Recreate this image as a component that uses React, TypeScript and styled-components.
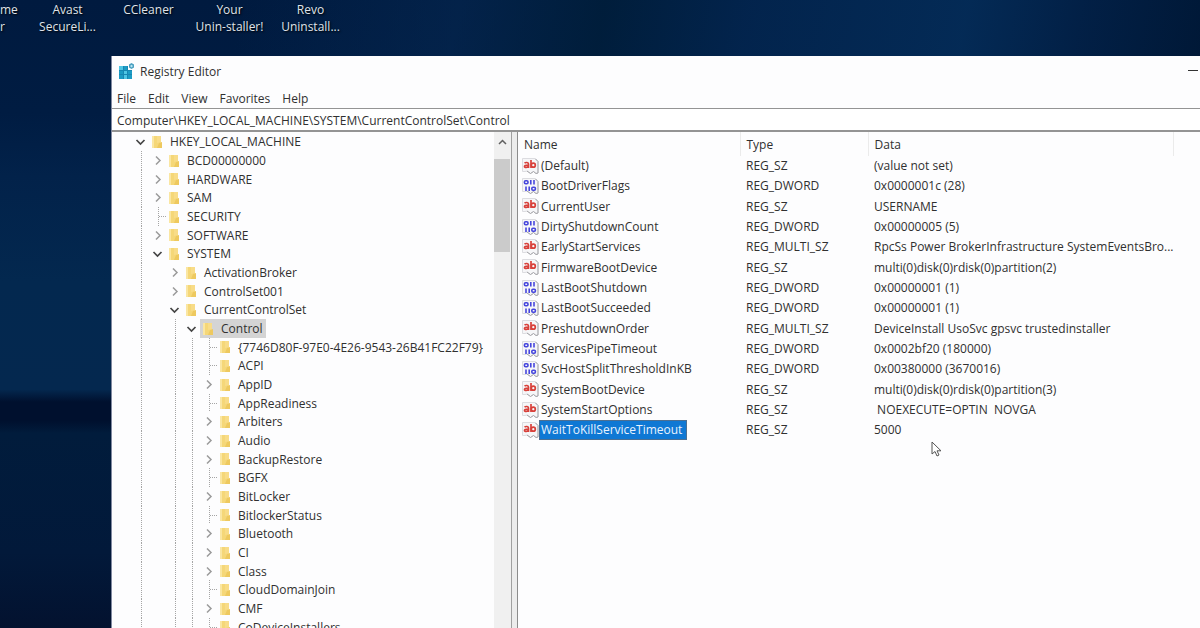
import React from 'react';
import styled, { createGlobalStyle, css } from 'styled-components';

const Global = createGlobalStyle`
  * { box-sizing: border-box; }
  body {
    margin: 0;
    overflow: hidden;
    font-family: 'Open Sans', 'Noto Sans', sans-serif;
    font-size: 12px;
    color: #303030;
  }
`;

const Desktop = styled.div`
  display: flex;
  flex-direction: column;
  height: 100vh;
  overflow: hidden;
  background:
    linear-gradient(100deg, rgba(0, 32, 70, 0) 20%, rgba(6, 42, 84, 0.5) 38%, rgba(0, 30, 58, 0.8) 50%, rgba(3, 38, 80, 0.8) 62%, rgba(4, 44, 88, 0.9) 80%, rgba(2, 32, 70, 0.9) 90%, rgba(0, 24, 54, 0.9) 100%) 0 0 / 100% 56px no-repeat,
    linear-gradient(180deg, #001a3f 0, #001c42 18%, #02224a 28%, #03284f 45%, #04284f 62%, #00102e 64%, #00102e 67%, #011c3c 69%, #02193a 88%, #03122f 100%);
`;

const Shortcuts = styled.nav`
  display: flex;
  flex: none;
  height: 56px;
  padding-top: 1px;
`;

const Shortcut = styled.a<{ $cut?: boolean }>`
  flex: none;
  width: ${(p) => (p.$cut ? 27 : 81)}px;
  color: #dfe3ea;
  font-size: 12px;
  line-height: 17px;
  text-align: ${(p) => (p.$cut ? 'left' : 'center')};
  text-decoration: none;
  text-shadow: 1px 1px 2px #000;
`;

const Line = styled.span`
  display: block;
  white-space: nowrap;
`;

const Window = styled.main`
  display: flex;
  flex: 1;
  flex-direction: column;
  min-height: 0;
  margin-left: 111px;
  border-left: 1px solid #8088a0;
  background: #fdfdfe;
`;

const TitleBar = styled.header`
  display: flex;
  flex: none;
  align-items: center;
  gap: 5px;
  height: 30px;
  padding-left: 6px;
`;

const Title = styled.h1`
  flex: 1;
  margin: 0;
  font-size: 12px;
  font-weight: 400;
`;

const Minimize = styled.button`
  display: flex;
  align-items: center;
  justify-content: flex-end;
  width: 46px;
  height: 30px;
  padding: 0 2px 0 0;
  border: 0;
  background: none;
`;

const MenuBar = styled.nav`
  display: flex;
  flex: none;
  gap: 12px;
  height: 22px;
  padding: 4px 0 0 5px;
`;

const MenuButton = styled.button`
  padding: 0;
  border: 0;
  background: none;
  color: inherit;
  font: inherit;
  line-height: 18px;
`;

const Address = styled.input`
  flex: none;
  width: 100%;
  height: 24px;
  padding: 1px 5px 0;
  border: solid #949494;
  border-width: 1px 0 2px;
  outline: 0;
  background: #fff;
  color: inherit;
  font: inherit;
`;

const Panes = styled.div`
  display: flex;
  flex: 1;
  min-height: 0;
`;

const TreePane = styled.section`
  display: flex;
  flex: none;
  width: 400px;
  border-right: 1px solid #a0a0a0;
`;

const Tree = styled.ul`
  flex: 1;
  margin: 0;
  padding: 0 0 0 20px;
  overflow: hidden;
  list-style: none;
`;

const TreeRow = styled.li`
  display: flex;
  height: 19px;
  &:nth-child(3n) { height: 18px; }
`;

const dotted = css`
  background-image: repeating-linear-gradient(180deg, #a5a5a5 0 1px, transparent 1px 2px);
  background-position: 9px 0;
  background-size: 1px 100%;
  background-repeat: no-repeat;
`;

const Guide = styled.span<{ $line: boolean }>`
  flex: none;
  width: 17px;
  ${(p) => p.$line && dotted}
`;

const LeafGuide = styled(Guide)`
  display: flex;
  align-items: center;
  justify-content: flex-end;
  &::after {
    content: '';
    width: 7px;
    border-top: 1px dotted #a5a5a5;
  }
`;

const Toggle = styled.button`
  display: flex;
  flex: none;
  align-items: center;
  justify-content: center;
  width: 17px;
  padding: 0;
  border: 0;
  background: none;
`;

const NodeLabel = styled.span<{ $selected: boolean }>`
  display: flex;
  align-items: center;
  gap: 7px;
  padding: 0 3px 0 2px;
  background: ${(p) => (p.$selected ? '#d4d4d4' : 'none')};
  white-space: nowrap;
`;

const Scrollbar = styled.div`
  display: flex;
  flex: none;
  flex-direction: column;
  width: 17px;
  background: #f0f0f0;
`;

const ScrollUp = styled.button`
  display: flex;
  align-items: center;
  justify-content: center;
  height: 27px;
  padding: 0 0 7px;
  border: 0;
  background: none;
`;

const ScrollThumb = styled.div`
  width: 16px;
  height: 93px;
  background: #cbcbcb;
`;

const Splitter = styled.div`
  flex: none;
  width: 6px;
  border-right: 1px solid #8c8c8c;
  background: #ececec;
`;

const ValuesPane = styled.section`
  flex: 1;
  min-width: 0;
  overflow: hidden;
`;

const Values = styled.table`
  width: 100%;
  border-collapse: collapse;
  table-layout: fixed;
`;

const HeadCell = styled.th<{ $width?: number }>`
  width: ${(p) => (p.$width ? `${p.$width}px` : 'auto')};
  height: 24px;
  padding: 0 0 0 6px;
  border-right: ${(p) => (p.$width ? '1px solid #ebebeb' : '0')};
  font-weight: 400;
  text-align: left;
`;

const ValueRow = styled.tr`
  height: 20px;
  &:nth-child(3n) { height: 21px; }
`;

const Cell = styled.td`
  padding: 0 0 0 6px;
  line-height: 18px;
  white-space: pre;
`;

const NameCell = styled(Cell)`
  padding: 0 0 0 4px;
`;

const NameBox = styled.span`
  display: flex;
  align-items: center;
`;

const ValueName = styled.span<{ $selected: boolean }>`
  margin-left: 1px;
  padding: 0 4px 0 1px;
  ${(p) => p.$selected && css`
    background: #0f78d4;
    color: #e8f3ff;
    outline: 1px solid #4c6f92;
  `}
`;

const Pointer = styled.svg`
  position: absolute;
  top: 441px;
  left: 931px;
  pointer-events: none;
`;

function RegistryIcon() {
  return (
    <svg width="17" height="17" viewBox="0 0 17 17" aria-hidden="true">
      <rect x="1" y="3" width="13" height="13" fill="#1c9bc4" />
      <path d="M1 3h4v4H1zM6 8h3v3H6zM6 12h3v4H6z" fill="#4fc6e4" />
      <path d="M5.500 3v13M9.500 3v13M1 7.500h13M1 11.500h13" stroke="#1787b2" />
      <rect x="10" y="1" width="6" height="6" fill="#fdfdfe" />
      <path d="M13.500 0l2.500 1.500v3l-2.500 1.500L11 4.500v-3z" fill="#4a9fc0" />
      <path d="M13.500 1.700L15 3l-1.500 1.500L12 3z" fill="#b9e6f2" />
    </svg>
  );
}

function FolderIcon() {
  return (
    <svg width="12" height="14" viewBox="0 0 12 14" aria-hidden="true">
      <path d="M1 1h8v6l2 1v5H1z" fill="#f5d778" />
      <path d="M1 1h2v12H1z" fill="#fae6a2" />
      <path d="M8 8l3-1v6H6z" fill="#eec95f" />
      <path d="M6 1h4v6l-4 1z" fill="#f8dc88" />
    </svg>
  );
}

function Chevron({ open }: { open: boolean }) {
  return open ? (
    <svg width="11" height="8" viewBox="0 0 11 8" fill="none" aria-hidden="true">
      <path d="M1.500 2l4 4 4-4" stroke="#454545" strokeWidth="1.700" />
    </svg>
  ) : (
    <svg width="8" height="11" viewBox="0 0 8 11" fill="none" aria-hidden="true">
      <path d="M2 1.500l4 4-4 4" stroke="#9a9a9a" strokeWidth="1.500" />
    </svg>
  );
}

function Page() {
  return (
    <>
      <path d="M.5.500h13l2.500 3V15l-2 .5-2.500-2-3 2-3.500-2.500-2 .5H.500z" fill="#f6f6f8" stroke="#dcdce0" />
      <path d="M13.500 1l2.500 2.500V15l-2 .5-2.500-2-3 2-3.500-2.500" fill="none" stroke="#a4a4a8" />
    </>
  );
}

function ValueIcon({ text }: { text: boolean }) {
  return (
    <svg width="17" height="17" viewBox="0 0 17 17" aria-hidden="true">
      <Page />
      {text ? (
        <g fill="none" stroke="#d8403a" strokeWidth="1.700">
          <path d="M2.500 5c1.200-.8 4-.8 4 1V10M6.500 7c-2.200 0-4 .2-4 1.400 0 1.500 3.200 1.300 4-.2" />
          <path d="M9 2v8" />
          <circle cx="11.300" cy="7.200" r="2" />
        </g>
      ) : (
        <g fill="none" stroke="#4646dc" strokeWidth="1.600">
          <rect x="2.400" y="2.800" width="3.600" height="3" rx="1.200" />
          <path d="M8.800 2v4.600M12 2v4.600M4 8.400v4.600M7.200 8.400v4.600" />
          <rect x="9.800" y="9.200" width="3.600" height="3" rx="1.200" />
        </g>
      )}
    </svg>
  );
}

type TreeNode = { name: string; level: number; state: 'open' | 'closed' | 'leaf' };

const node = (level: number, state: TreeNode['state'], name: string): TreeNode => ({ level, state, name });

const nodes: TreeNode[] = [
  node(0, 'open', 'HKEY_LOCAL_MACHINE'),
  node(1, 'closed', 'BCD00000000'),
  node(1, 'closed', 'HARDWARE'),
  node(1, 'closed', 'SAM'),
  node(1, 'leaf', 'SECURITY'),
  node(1, 'closed', 'SOFTWARE'),
  node(1, 'open', 'SYSTEM'),
  node(2, 'closed', 'ActivationBroker'),
  node(2, 'closed', 'ControlSet001'),
  node(2, 'open', 'CurrentControlSet'),
  node(3, 'open', 'Control'),
  node(4, 'leaf', '{7746D80F-97E0-4E26-9543-26B41FC22F79}'),
  node(4, 'leaf', 'ACPI'),
  node(4, 'closed', 'AppID'),
  node(4, 'leaf', 'AppReadiness'),
  node(4, 'closed', 'Arbiters'),
  node(4, 'closed', 'Audio'),
  node(4, 'closed', 'BackupRestore'),
  node(4, 'leaf', 'BGFX'),
  node(4, 'closed', 'BitLocker'),
  node(4, 'leaf', 'BitlockerStatus'),
  node(4, 'closed', 'Bluetooth'),
  node(4, 'closed', 'CI'),
  node(4, 'closed', 'Class'),
  node(4, 'leaf', 'CloudDomainJoin'),
  node(4, 'closed', 'CMF'),
  node(4, 'leaf', 'CoDeviceInstallers'),
];

const values: [string, string, string][] = [
  ['(Default)', 'REG_SZ', '(value not set)'],
  ['BootDriverFlags', 'REG_DWORD', '0x0000001c (28)'],
  ['CurrentUser', 'REG_SZ', 'USERNAME'],
  ['DirtyShutdownCount', 'REG_DWORD', '0x00000005 (5)'],
  ['EarlyStartServices', 'REG_MULTI_SZ', 'RpcSs Power BrokerInfrastructure SystemEventsBro...'],
  ['FirmwareBootDevice', 'REG_SZ', 'multi(0)disk(0)rdisk(0)partition(2)'],
  ['LastBootShutdown', 'REG_DWORD', '0x00000001 (1)'],
  ['LastBootSucceeded', 'REG_DWORD', '0x00000001 (1)'],
  ['PreshutdownOrder', 'REG_MULTI_SZ', 'DeviceInstall UsoSvc gpsvc trustedinstaller'],
  ['ServicesPipeTimeout', 'REG_DWORD', '0x0002bf20 (180000)'],
  ['SvcHostSplitThresholdInKB', 'REG_DWORD', '0x00380000 (3670016)'],
  ['SystemBootDevice', 'REG_SZ', 'multi(0)disk(0)rdisk(0)partition(3)'],
  ['SystemStartOptions', 'REG_SZ', ' NOEXECUTE=OPTIN  NOVGA'],
  ['WaitToKillServiceTimeout', 'REG_SZ', '5000'],
];

const shortcuts = [['me', 'r'], ['Avast', 'SecureLi...'], ['CCleaner'], ['Your', 'Unin-staller!'], ['Revo', 'Uninstall...']];

export default function App() {
  return (
    <Desktop>
      <Global />
      <Shortcuts aria-label="Desktop shortcuts">
        {shortcuts.map((lines, i) => (
          <Shortcut key={lines[0]} href="#" $cut={i === 0}>
            {lines.map((line) => <Line key={line}>{line}</Line>)}
          </Shortcut>
        ))}
      </Shortcuts>
      <Window>
        <TitleBar>
          <RegistryIcon />
          <Title>Registry Editor</Title>
          <Minimize aria-label="Minimize">
            <svg width="10" height="2" aria-hidden="true"><path d="M0 .5h10" stroke="#333" /></svg>
          </Minimize>
        </TitleBar>
        <MenuBar>
          {['File', 'Edit', 'View', 'Favorites', 'Help'].map((item) => <MenuButton key={item}>{item}</MenuButton>)}
        </MenuBar>
        <Address
          aria-label="Key path"
          defaultValue={'Computer\\HKEY_LOCAL_MACHINE\\SYSTEM\\CurrentControlSet\\Control'}
        />
        <Panes>
          <TreePane>
            <Tree>
              {nodes.map(({ name, level, state }) => (
                <TreeRow key={name}>
                  {Array.from({ length: level }, (_, depth) => <Guide key={depth} $line={depth !== 1} />)}
                  {state === 'leaf' ? (
                    <LeafGuide $line />
                  ) : (
                    <Toggle aria-label={`Toggle ${name}`} aria-expanded={state === 'open'}>
                      <Chevron open={state === 'open'} />
                    </Toggle>
                  )}
                  <NodeLabel $selected={name === 'Control'}>
                    <FolderIcon />
                    {name}
                  </NodeLabel>
                </TreeRow>
              ))}
            </Tree>
            <Scrollbar>
              <ScrollUp aria-label="Scroll up">
                <svg width="9" height="6" fill="none" aria-hidden="true">
                  <path d="M1 5l3.500-3.500L8 5" stroke="#606060" strokeWidth="1.500" />
                </svg>
              </ScrollUp>
              <ScrollThumb />
            </Scrollbar>
          </TreePane>
          <Splitter />
          <ValuesPane>
            <Values>
              <thead>
                <tr>
                  <HeadCell $width={222}>Name</HeadCell>
                  <HeadCell $width={128}>Type</HeadCell>
                  <HeadCell $width={305}>Data</HeadCell>
                  <HeadCell aria-hidden="true" />
                </tr>
              </thead>
              <tbody>
                {values.map(([name, type, data]) => (
                  <ValueRow key={name}>
                    <NameCell>
                      <NameBox>
                        <ValueIcon text={type !== 'REG_DWORD'} />
                        <ValueName $selected={name === 'WaitToKillServiceTimeout'}>{name}</ValueName>
                      </NameBox>
                    </NameCell>
                    <Cell>{type}</Cell>
                    <Cell>{data}</Cell>
                    <Cell />
                  </ValueRow>
                ))}
              </tbody>
            </Values>
          </ValuesPane>
        </Panes>
      </Window>
      <Pointer width="12" height="17" viewBox="0 0 12 17" aria-hidden="true">
        <path d="M1 1v12l3-2.500 2 4.500 2-1-2-4.200h4z" fill="#fff" stroke="#555" />
      </Pointer>
    </Desktop>
  );
}
